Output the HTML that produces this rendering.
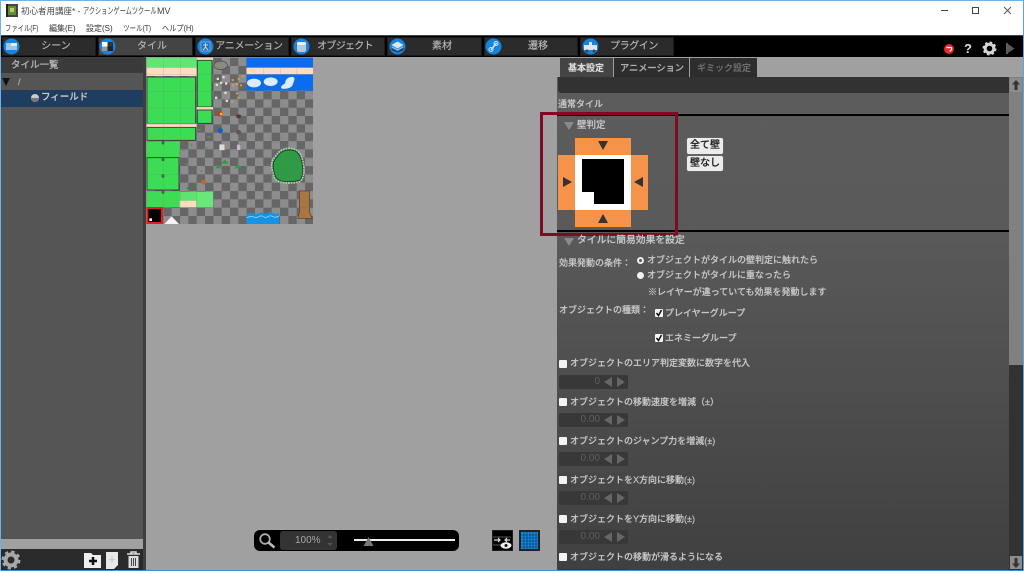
<!DOCTYPE html>
<html><head><meta charset="utf-8"><style>
html,body{margin:0;padding:0;background:#a0a0a0}
body{width:1024px;height:571px;overflow:hidden;position:relative;font-family:"Liberation Sans","Noto Sans CJK JP",sans-serif}
div,span,svg{position:absolute;box-sizing:border-box}
#r{left:0;top:0;width:1024px;height:571px;overflow:hidden;filter:blur(.3px)}
.t{white-space:nowrap;line-height:12px;font-size:9px;color:#c9c9c9;font-weight:500;-webkit-text-stroke:.15px #c9c9c9}
.w{color:#333;line-height:12px;font-size:8px;white-space:nowrap;transform-origin:0 50%}
.tab{top:37px;height:19px;background:#2b2b2b;border:1px solid #1a1a1a}
.tl{top:37px;height:19px;line-height:19px;font-size:10px;color:#b8b8b8;white-space:nowrap;text-align:center;-webkit-text-stroke:.15px #b8b8b8}
.ic{top:38px;width:17px;height:17px}
.cb{width:8px;height:8px;background:#f4f4f4;border-radius:1px}
.inp{left:559px;width:69px;height:14px;background:#383838;border-radius:2px}
.num{left:570px;width:30px;text-align:right;font-size:10px;line-height:14px;color:#5f5f5f;white-space:nowrap}
.rt{left:559px}
.sec{left:564px;width:0;height:0;border-left:5px solid transparent;border-right:5px solid transparent;border-top:8px solid #8a8a8a}
.b{background:#ececec;border-radius:2px;color:#222;font-size:10px;line-height:16px;text-align:center;white-space:nowrap;font-weight:500;-webkit-text-stroke:.2px #222;box-shadow:0 0 1px #999}
</style></head><body><div id="r">
<!-- window chrome -->
<div style="left:0;top:0;width:1024px;height:36px;background:#fff"></div>
<div style="left:0;top:0;width:1024px;height:1px;background:#6fb2e8"></div>
<svg style="left:6px;top:4px" width="12" height="13" viewBox="0 0 12 13"><rect width="12" height="13" fill="#444"/><rect x="2" y="2" width="8" height="9" fill="#5c8c3c"/><rect x="4" y="4" width="4" height="4" fill="#c8c860"/><rect x="0" y="0" width="2" height="13" fill="#222"/></svg>
<div class="w" style="left:21px;top:5px;font-size:8.500px;color:#444">初心者用講座* -</div>
<div class="w" style="left:83px;top:5px;font-size:9px;color:#444;transform:scaleX(.685)">アクションゲームツクール</div>
<div class="w" style="left:157px;top:5px;font-size:9px;color:#444">MV</div>
<div class="w" style="left:5px;top:23px;transform:scaleX(.79)">ファイル(F)</div>
<div class="w" style="left:49px;top:23px">編集(E)</div>
<div class="w" style="left:86px;top:23px">設定(S)</div>
<div class="w" style="left:123px;top:23px;transform:scaleX(.82)">ツール(T)</div>
<div class="w" style="left:162px;top:23px;transform:scaleX(.9)">ヘルプ(H)</div>
<svg style="left:935px;top:3px" width="85" height="15" viewBox="0 0 85 15"><path d="M6 7.500h7" stroke="#444"/><rect x="37.500" y="4.500" width="6" height="6" fill="none" stroke="#444"/><path d="M69 4l7 7M76 4l-7 7" stroke="#555"/></svg>

<!-- top bar -->
<div style="left:0;top:35px;width:1024px;height:22px;background:#000;border-top:1px solid #444"></div>
<div class="tab" style="left:2px;width:94px"></div>
<div class="tab" style="left:98px;width:95px;background:#444"></div>
<div class="tab" style="left:195px;width:94px"></div>
<div class="tab" style="left:291px;width:94px"></div>
<div class="tab" style="left:387px;width:95px"></div>
<div class="tab" style="left:484px;width:94px"></div>
<div class="tab" style="left:580px;width:94px"></div>
<div class="tl" style="left:21px;width:70px">シーン</div>
<div class="tl" style="left:117px;width:70px">タイル</div>
<div class="tl" style="left:214px;width:70px;letter-spacing:-.3px">アニメーション</div>
<div class="tl" style="left:310px;width:70px;letter-spacing:-.7px">オブジェクト</div>
<div class="tl" style="left:407px;width:70px">素材</div>
<div class="tl" style="left:503px;width:70px">遷移</div>
<div class="tl" style="left:599px;width:70px;letter-spacing:-.4px">プラグイン</div>
<svg class="ic" style="left:3px" viewBox="0 0 17 17"><circle cx="8.500" cy="8.500" r="8" fill="#1583e0"/><rect x="3" y="5" width="11" height="7" fill="#9cc4e4"/><rect x="8" y="5" width="6" height="3" fill="#dfeaf4"/></svg>
<svg class="ic" style="left:99px" viewBox="0 0 17 17"><circle cx="8.500" cy="8.500" r="8" fill="#1583e0"/><rect x="3" y="4" width="5.500" height="4.500" fill="#fff"/><rect x="8.500" y="4" width="5.500" height="4.500" fill="#333"/><rect x="3" y="8.500" width="5.500" height="4.500" fill="#999"/><rect x="8.500" y="8.500" width="5.500" height="4.500" fill="#222"/></svg>
<svg class="ic" style="left:197px" viewBox="0 0 17 17"><circle cx="8.500" cy="8.500" r="8" fill="#1583e0"/><rect x="4" y="4" width="9" height="9" fill="#2a70b0" stroke="#9cc4e4" stroke-width=".6"/><path d="M8.500 5v4M6 12l2.500-3 2.500 3M6 7h5" stroke="#bcd8ee" fill="none"/></svg>
<svg class="ic" style="left:293px" viewBox="0 0 17 17"><circle cx="8.500" cy="8.500" r="8" fill="#1583e0"/><rect x="4" y="4" width="9" height="10" rx="2" fill="#bcc8d2"/><rect x="4" y="4" width="9" height="3" rx="1.500" fill="#eef"/></svg>
<svg class="ic" style="left:389px" viewBox="0 0 17 17"><circle cx="8.500" cy="8.500" r="8" fill="#1583e0"/><path d="M2.500 10l6 3.500 6-3.500v2l-6 2.500-6-2.500z" fill="#333"/><path d="M2.500 7l6-3.500 6 3.500-6 3.500z" fill="#dbe8f2"/><path d="M3 9l5.500 3 5.500-3" stroke="#9fc4e0" fill="none"/></svg>
<svg class="ic" style="left:485px" viewBox="0 0 17 17"><circle cx="8.500" cy="8.500" r="8" fill="#1583e0"/><path d="M6 12l5.500-7" stroke="#cfe2f2" stroke-width="1.600"/><circle cx="11" cy="5.500" r="2" fill="none" stroke="#cfe2f2"/><circle cx="6" cy="11.500" r="2" fill="none" stroke="#cfe2f2"/></svg>
<svg class="ic" style="left:582px" viewBox="0 0 17 17"><circle cx="8.500" cy="8.500" r="8" fill="#1583e0"/><path d="M2 7h5V4h3v3h5v5H2z" fill="#dbe6ef"/><circle cx="5" cy="13" r="1.500" fill="#444"/><circle cx="12" cy="13" r="1.500" fill="#444"/></svg>
<!-- top right icons -->
<svg style="left:943px;top:42px" width="15" height="14" viewBox="0 0 15 14"><circle cx="6" cy="7" r="5" fill="#e8282c"/><path d="M3.500 5.500h4.500c1 0 1 3.500-1.500 3.500" stroke="#fff" fill="none" stroke-width="1.200"/></svg>
<div style="left:964px;top:41px;width:10px;font-size:13px;line-height:15px;font-weight:bold;color:#ddd;font-family:'Liberation Sans',sans-serif">?</div>
<svg style="left:982px;top:41px" width="15" height="15" viewBox="0 0 15 15"><circle cx="7.500" cy="7.500" r="4.300" fill="none" stroke="#d4d4d4" stroke-width="3"/><circle cx="7.500" cy="7.500" r="6" fill="none" stroke="#d4d4d4" stroke-width="2" stroke-dasharray="2.500 2.200"/></svg>
<svg style="left:1006px;top:43px" width="9" height="11" viewBox="0 0 9 11"><path d="M0 0h2v11H0zM2 1l6.500 4.500L2 10z" fill="#5a5a5a"/></svg>

<!-- left panel -->
<div style="left:0;top:57px;width:143px;height:482px;background:#555"></div>
<div style="left:0;top:57px;width:143px;height:16px;background:#3a3a3a"></div>
<div class="t" style="left:11px;top:60px;color:#aaa;font-size:9.500px">タイル一覧</div>
<div style="left:2px;top:78px;width:0;height:0;border-left:4.500px solid transparent;border-right:4.500px solid transparent;border-top:8px solid #111"></div>
<div class="t" style="left:18px;top:76px;color:#aaa">/</div>
<div style="left:0;top:90px;width:143px;height:17px;background:#1f3d5e"></div>
<svg style="left:30px;top:93px" width="10" height="10" viewBox="0 0 10 10"><circle cx="5" cy="5" r="4" fill="#ccc"/><path d="M1 5h8a4 4 0 0 1-8 0z" fill="#777"/></svg>
<div class="t" style="left:41px;top:92px;color:#ccc;font-size:9.500px">フィールド</div>
<div style="left:0;top:549px;width:143px;height:21px;background:#2a2a2a"></div>
<div style="left:143px;top:57px;width:3px;height:513px;background:#3e3e3e"></div>
<svg style="left:1px;top:550px" width="20" height="20" viewBox="0 0 20 20"><circle cx="10" cy="10" r="5.500" fill="none" stroke="#a8a8a8" stroke-width="4"/><circle cx="10" cy="10" r="8" fill="none" stroke="#a8a8a8" stroke-width="3" stroke-dasharray="3.200 3.080"/></svg>
<svg style="left:83px;top:552px" width="20" height="17" viewBox="0 0 20 17"><path d="M1 1h7l2 2h8v13H1z" fill="#eee"/><path d="M9 5v8M5 9h8" stroke="#111" stroke-width="2.500" transform="translate(1 0)"/></svg>
<svg style="left:105px;top:551px" width="14" height="19" viewBox="0 0 14 19"><path d="M1 1h12v13l-4 4H1z" fill="#e8e8e8"/><path d="M7 5v7M4 8.500h6" stroke="#ccc" stroke-width="1.200"/></svg>
<svg style="left:126px;top:551px" width="15" height="18" viewBox="0 0 15 18"><path d="M1 3h13M5 3V1h5v2" stroke="#ddd" stroke-width="1.500" fill="none"/><path d="M2.500 5h10v12h-10z" fill="#ddd"/><path d="M5.500 7v8M7.500 7v8M9.500 7v8" stroke="#444"/></svg>

<!-- tileset -->
<svg style="left:144px;top:55px" width="175" height="175" viewBox="0 0 525 525">
<defs>
<pattern id="ck" width="50" height="50" patternUnits="userSpaceOnUse" x="8" y="8"><rect width="50" height="50" fill="#8d8d8d"/><rect width="25" height="25" fill="#666"/><rect x="25" y="25" width="25" height="25" fill="#666"/></pattern>
<pattern id="gr" width="50" height="50" patternUnits="userSpaceOnUse" x="8" y="8"><path d="M0 0H50M0 0V50" stroke="#5a6a8c" stroke-width="1.500" fill="none" opacity=".6"/></pattern>
</defs>
<rect x="8" y="8" width="499" height="499" fill="url(#ck)"/>
<rect x="8" y="8" width="150" height="30" fill="#62e673"/>
<rect x="8" y="38" width="150" height="25" fill="#fddcc0"/>
<rect x="9" y="66" width="146" height="140" fill="#3ddc55" stroke="#333" stroke-width="2.500"/>
<rect x="8" y="206" width="150" height="10" fill="#fddcc0"/>
<rect x="9" y="217" width="146" height="39" fill="#3ddc55" stroke="#333" stroke-width="2.500"/>
<rect x="8" y="259" width="99" height="48" fill="#3ddc55"/>
<rect x="9" y="308" width="96" height="97" fill="#3ddc55" stroke="#333" stroke-width="2.500"/>
<rect x="8" y="408" width="99" height="48" fill="#3ddc55"/>
<g fill="#555"><rect x="53" y="258" width="8" height="10"/><rect x="53" y="308" width="8" height="10"/><rect x="53" y="358" width="8" height="10"/><rect x="53" y="406" width="8" height="10"/></g>
<rect x="107" y="410" width="50" height="27" fill="#5fe26f"/>
<rect x="107" y="437" width="50" height="20" fill="#fddcc0"/>
<rect x="157" y="410" width="50" height="47" fill="#68e878"/>
<rect x="158" y="8" width="49" height="8" fill="#fddcc0"/>
<rect x="160" y="16" width="44" height="140" fill="#3ddc55" stroke="#333" stroke-width="2.500"/>
<rect x="158" y="156" width="49" height="8" fill="#fddcc0"/>
<rect x="160" y="165" width="44" height="40" fill="#3ddc55" stroke="#333" stroke-width="2.500"/>
<rect x="307" y="8" width="200" height="30" fill="#0a6cf0"/>
<rect x="307" y="38" width="200" height="20" fill="#fddcc0"/>
<rect x="307" y="58" width="200" height="49" fill="#0a6cf0"/>
<g fill="#dcecfb"><ellipse cx="330" cy="84" rx="21" ry="13"/><ellipse cx="380" cy="80" rx="21" ry="13"/><path d="M412 100c-4-8 8-12 12-16-2-10 10-20 24-18 8 4 0 16-2 24-4 10-24 14-34 10z"/></g>
<ellipse cx="230" cy="31" rx="20" ry="13" fill="#8a8a80" stroke="#444" stroke-width="2"/>
<g fill="#e0e0d0"><rect x="218" y="68" width="7" height="7"/><rect x="235" y="63" width="7" height="7"/><rect x="228" y="80" width="7" height="7"/><rect x="243" y="82" width="7" height="7"/><rect x="215" y="86" width="7" height="7"/><rect x="213" y="125" width="7" height="7"/><rect x="241" y="110" width="7" height="7"/><rect x="245" y="134" width="7" height="7"/></g>
<g fill="#d89a50"><rect x="263" y="72" width="6" height="6"/><rect x="281" y="69" width="6" height="6"/><rect x="294" y="61" width="6" height="6"/><rect x="265" y="88" width="6" height="6"/><rect x="276" y="84" width="6" height="6"/><rect x="288" y="88" width="6" height="6"/><rect x="276" y="112" width="6" height="6"/><rect x="280" y="125" width="6" height="6"/><rect x="262" y="137" width="6" height="6"/></g>
<circle cx="228" cy="177" r="8" fill="#c8361f"/><circle cx="231" cy="177" r="4" fill="#e8c020"/>
<ellipse cx="284" cy="184" rx="8" ry="6" fill="#5a3a30"/>
<circle cx="229" cy="227" r="8" fill="#1060c0"/><ellipse cx="284" cy="232" rx="7" ry="7" fill="#6a5050"/>
<rect x="226" y="268" width="16" height="18" fill="#ddd" stroke="#777"/><rect x="278" y="268" width="12" height="18" fill="#c8b8c8" stroke="#555"/>
<path d="M213 340l10-11 11 11zM231 326l11-12 12 12zM271 340l11-13 12 13z" fill="#2f9a45"/>
<circle cx="178" cy="381" r="7" fill="#b86a28"/>
<path d="M128 400l8-1M142 392l8-1" stroke="#2c8c3c" stroke-width="5"/>
<g fill="#5f8f58"><rect x="160" y="222" width="10" height="4"/><rect x="190" y="244" width="10" height="4"/><rect x="138" y="268" width="8" height="4"/><rect x="182" y="276" width="10" height="4"/><rect x="114" y="284" width="8" height="4"/><rect x="124" y="326" width="8" height="4"/><rect x="168" y="346" width="8" height="4"/></g>
<path d="M383 326c2-14 10-20 16-28 10-14 30-22 50-16 22 6 28 30 30 56 1 20-2 36-12 42-22 6-42 4-56 2-12-4-20-8-22-22-2-10-8-22-6-34z" fill="#2f9b45" stroke="#c8c8c8" stroke-width="5" stroke-dasharray="5 3"/>
<path d="M388 326c2-12 10-18 14-24 10-14 28-20 46-16 20 6 26 28 28 52 1 18-2 32-10 38-20 6-40 4-54 2-10-4-18-8-20-20-2-10-6-20-4-32z" fill="#2f9b45" stroke="#1b3f22" stroke-width="2.500"/>
<path d="M466 408h31v65l8 17h-44l5-17z" fill="#a87640" stroke="#5a3a20" stroke-width="2"/>
<path d="M307 478l14-4 16 4 14-6 14 6 14-8 14 7 12-3v33h-98z" fill="#1494e8"/>
<path d="M307 488l14-4 16 4 14-6 14 6 14-6 14 5 12-3" stroke="#8fd4f8" stroke-width="2.500" fill="none"/>
<rect x="10" y="459" width="44" height="45" fill="#000" stroke="#f01818" stroke-width="6"/>
<rect x="16" y="490" width="8" height="8" fill="#fff"/>
<path d="M61 507l22-23 22 23z" fill="#f4f4f4"/>
<rect x="8" y="8" width="499" height="499" fill="url(#gr)"/>
</svg>

<!-- zoom bar -->
<div style="left:254px;top:530px;width:205px;height:21px;background:#000;border-radius:6px"></div>
<svg style="left:258px;top:532px" width="20" height="18" viewBox="0 0 20 18"><circle cx="7" cy="7" r="4.800" fill="none" stroke="#aaa" stroke-width="1.800"/><path d="M10.500 10.500l6 5" stroke="#bbb" stroke-width="2.500"/></svg>
<div style="left:280px;top:531px;width:57px;height:19px;background:#333;border-radius:3px"></div>
<div class="t" style="left:295px;top:535px;color:#a8a8a8;font-size:10px;-webkit-text-stroke:0;font-family:'Liberation Sans',sans-serif">100%</div>
<svg style="left:326px;top:534px" width="8" height="13" viewBox="0 0 8 13"><path d="M4 1l2.500 3h-5zM4 12l2.500-3h-5z" fill="#555"/></svg>
<div style="left:354px;top:539px;width:101px;height:2px;background:#eee"></div>
<svg style="left:363px;top:537px" width="11" height="9" viewBox="0 0 11 9"><path d="M5.500 0l5 9h-10z" fill="#777"/></svg>
<svg style="left:492px;top:530px" width="21" height="21" viewBox="0 0 21 21"><rect width="21" height="21" fill="#000" stroke="#333"/><path d="M1 7h18M1 15h9" stroke="#777" stroke-width=".8"/><path d="M2 10h6M6 8l2 2-2 2M18 10h-5M15 8l-2 2 2 2" stroke="#ddd" stroke-width="1.200" fill="none"/><ellipse cx="14" cy="15.500" rx="5.500" ry="3.200" fill="#eee"/><circle cx="14" cy="15.500" r="1.500" fill="#111"/></svg>
<svg style="left:519px;top:530px" width="21" height="21" viewBox="0 0 21 21"><rect width="21" height="21" fill="#222"/><rect x="2" y="2" width="17" height="17" fill="#0f8fe6"/><path d="M5 2v17M8 2v17M11 2v17M14 2v17M17 2v17M2 5h17M2 8h17M2 11h17M2 14h17M2 17h17" stroke="#0b2a48" stroke-width=".6"/></svg>

<!-- right panel -->
<div style="left:556px;top:57px;width:468px;height:513px;background:#a0a0a0"></div>
<div style="left:560px;top:58px;width:53px;height:19px;background:#444"></div>
<div style="left:614px;top:58px;width:75px;height:19px;background:#2d2d2d"></div>
<div style="left:690px;top:58px;width:67px;height:19px;background:#2d2d2d"></div>
<div class="t" style="left:568px;top:62px;color:#ddd;font-weight:700">基本設定</div>
<div class="t" style="left:620px;top:62px;color:#aaa;font-size:9.200px">アニメーション</div>
<div class="t" style="left:697px;top:62px;color:#6d6d6d;-webkit-text-stroke:0;font-weight:700">ギミック設定</div>
<div style="left:557px;top:77px;width:452px;height:493px;background:linear-gradient(#5c5c5c 0,#5a5a5a 30%,#404040 100%)"></div>
<div style="left:558px;top:77px;width:451px;height:16px;background:#323232;border-radius:0 0 0 3px"></div>
<div style="left:1009px;top:77px;width:14px;height:288px;background:#808080"></div>
<div style="left:1009px;top:365px;width:14px;height:205px;background:#323232"></div>
<div style="left:1010px;top:78px;width:12px;height:14px;background:#8c8c8c"></div>
<div style="left:1010px;top:556px;width:12px;height:13px;background:#8c8c8c"></div>
<svg style="left:1012px;top:80px" width="8" height="10" viewBox="0 0 8 10"><path d="M4 0l4 4.500H5.500V10h-3V4.500H0z" fill="#333"/></svg>
<svg style="left:1012px;top:558px" width="8" height="10" viewBox="0 0 8 10"><path d="M4 10l4-4.500H5.500V0h-3v5.500H0z" fill="#333"/></svg>

<div class="t" style="left:558px;top:98px">通常タイル</div>
<div style="left:557px;top:114px;width:452px;height:2px;background:#000"></div>
<div style="left:557px;top:230px;width:452px;height:2px;background:#000"></div>
<div class="sec" style="top:122px"></div>
<div class="t" style="left:577px;top:119px;font-size:9.500px;margin-top:1px">壁判定</div>

<!-- collision widget -->
<div style="left:575px;top:138px;width:56px;height:89px;background:#f49349"></div>
<div style="left:558px;top:155px;width:90px;height:55px;background:#f49349"></div>
<div style="left:575px;top:155px;width:56px;height:55px;background:#fff"></div>
<svg style="left:582px;top:159px" width="42" height="45" viewBox="0 0 42 45"><path d="M0 0h42v45H12V33H0z" fill="#000"/></svg>
<svg style="left:558px;top:138px" width="90" height="89" viewBox="0 0 90 89" fill="#333"><path d="M40 3h10l-5 9zM40 85h10l-5-9zM5 39v10l9-5zM85 39v10l-9-5z"/></svg>
<div class="b" style="left:687px;top:138px;width:36px;height:16px">全て壁</div>
<div class="b" style="left:687px;top:156px;width:36px;height:15px;line-height:15px">壁なし</div>
<!-- red box -->
<div style="left:540px;top:112px;width:138px;height:124px;border:3px solid #7f0a24"></div>

<div class="sec" style="top:238px"></div>
<div class="t" style="left:577px;top:235px;font-size:9.800px">タイルに簡易効果を設定</div>
<div class="t rt" style="top:257px">効果発動の条件：</div>
<div style="left:637px;top:257px;width:7px;height:7px;border:2px solid #eee;border-radius:50%"></div>
<div class="t" style="left:647px;top:254px">オブジェクトがタイルの壁判定に触れたら</div>
<div style="left:637px;top:272px;width:7px;height:7px;background:#f2f2f2;border-radius:50%"></div>
<div class="t" style="left:647px;top:269px">オブジェクトがタイルに重なったら</div>
<div class="t" style="left:648px;top:286px">※レイヤーが違っていても効果を発動します</div>
<div class="t rt" style="top:304px">オブジェクトの種類：</div>
<svg style="left:655px;top:309px" width="8" height="8" viewBox="0 0 8 8"><rect width="8" height="8" rx="1" fill="#f4f4f4"/><path d="M1.500 4l2 2.500L6.500 1" stroke="#111" stroke-width="1.500" fill="none"/></svg>
<div class="t" style="left:665px;top:307px">プレイヤーグループ</div>
<svg style="left:655px;top:334px" width="8" height="8" viewBox="0 0 8 8"><rect width="8" height="8" rx="1" fill="#f4f4f4"/><path d="M1.500 4l2 2.500L6.500 1" stroke="#111" stroke-width="1.500" fill="none"/></svg>
<div class="t" style="left:665px;top:332px">エネミーグループ</div>

<div class="cb" style="left:559px;top:360px"></div><div class="t" style="left:570px;top:357px">オブジェクトのエリア判定変数に数字を代入</div>
<div class="inp" style="top:375px"></div><div class="num" style="top:375px">0</div>
<div class="cb" style="left:559px;top:398px"></div><div class="t" style="left:570px;top:396px">オブジェクトの移動速度を増減（±）</div>
<div class="inp" style="top:413px"></div><div class="num" style="top:413px">0.00</div>
<div class="cb" style="left:559px;top:437px"></div><div class="t" style="left:570px;top:435px">オブジェクトのジャンプ力を増減(±)</div>
<div class="inp" style="top:452px"></div><div class="num" style="top:452px">0.00</div>
<div class="cb" style="left:559px;top:476px"></div><div class="t" style="left:570px;top:474px">オブジェクトをX方向に移動(±)</div>
<div class="inp" style="top:491px"></div><div class="num" style="top:491px">0.00</div>
<div class="cb" style="left:559px;top:515px"></div><div class="t" style="left:570px;top:513px">オブジェクトをY方向に移動(±)</div>
<div class="inp" style="top:530px"></div><div class="num" style="top:530px">0.00</div>
<div class="cb" style="left:559px;top:553px"></div><div class="t" style="left:570px;top:551px">オブジェクトの移動が滑るようになる</div>
<div class="inp" style="top:569px;height:1px"></div>
<!-- spinner arrows -->
<svg style="left:603px;top:375px" width="25" height="168" viewBox="0 0 25 168" fill="#666"><path d="M9 2v10L1 7zM14 2v10l8-5zM9 40v10L1 45zM14 40v10l8-5zM9 79v10L1 84zM14 79v10l8-5zM9 118v10L1 123zM14 118v10l8-5zM9 157v10L1 162zM14 157v10l8-5z"/></svg>

<!-- window edges -->
<div style="left:0;top:570px;width:1024px;height:1px;background:#3a8fd6"></div>
<div style="left:0;top:0;width:1px;height:571px;background:#6fb2e8"></div>
<div style="left:1023px;top:0;width:1px;height:571px;background:#5aa5e0"></div>
</div></body></html>
